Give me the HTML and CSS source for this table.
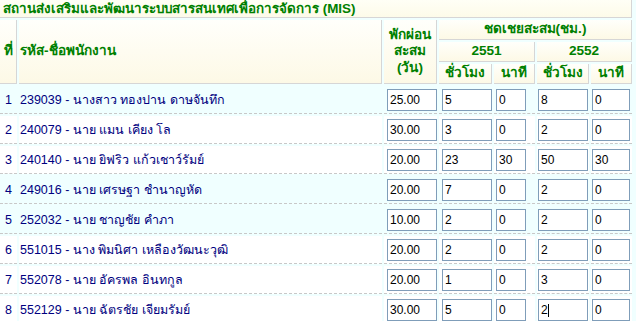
FILE: index.html
```html
<!DOCTYPE html>
<html lang="th">
<head>
<meta charset="utf-8">
<title>MIS</title>
<link rel="stylesheet" href="styles.css">
</head>
<body>
<table class="grid">
  <colgroup>
    <col class="c1"><col class="c2"><col class="c3"><col class="c4"><col class="c5"><col class="c6"><col class="c7">
  </colgroup>
  <thead>
    <tr><th class="title" colspan="7">สถานส่งเสริมและพัฒนาระบบสารสนเทศเพื่อการจัดการ (MIS)</th></tr>
    <tr>
      <th class="hd center" rowspan="3">ที่</th>
      <th class="hd left" rowspan="3">รหัส-ชื่อพนักงาน</th>
      <th class="hd center stack" rowspan="3">พักผ่อน<br>สะสม<br>(วัน)</th>
      <th class="hd center" colspan="4">ชดเชยสะสม(ชม.)</th>
    </tr>
    <tr>
      <th class="hd center" colspan="2">2551</th>
      <th class="hd center" colspan="2">2552</th>
    </tr>
    <tr>
      <th class="hd center">ชั่วโมง</th>
      <th class="hd center">นาที</th>
      <th class="hd center">ชั่วโมง</th>
      <th class="hd center">นาที</th>
    </tr>
  </thead>
  <tbody>
    <tr class="hl">
      <td class="num">1</td><td class="name">239039 - นางสาว ทองปาน ดาษจันทึก</td>
      <td class="p3"><input class="fld w50" value="25.00"></td><td class="p3"><input class="fld w50" value="5"></td>
      <td class="p2"><input class="fld w30" value="0"></td><td class="p1"><input class="fld w50" value="8"></td>
      <td class="p1"><input class="fld w38" value="0"></td>
    </tr>
    <tr>
      <td class="num">2</td><td class="name">240079 - นาย แมน เคียง โล</td>
      <td class="p3"><input class="fld w50" value="30.00"></td><td class="p3"><input class="fld w50" value="3"></td>
      <td class="p2"><input class="fld w30" value="0"></td><td class="p1"><input class="fld w50" value="2"></td>
      <td class="p1"><input class="fld w38" value="0"></td>
    </tr>
    <tr>
      <td class="num">3</td><td class="name">240140 - นาย ยิฟริว แก้วเชาว์รัมย์</td>
      <td class="p3"><input class="fld w50" value="20.00"></td><td class="p3"><input class="fld w50" value="23"></td>
      <td class="p2"><input class="fld w30" value="30"></td><td class="p1"><input class="fld w50" value="50"></td>
      <td class="p1"><input class="fld w38" value="30"></td>
    </tr>
    <tr class="hl">
      <td class="num">4</td><td class="name">249016 - นาย เศรษฐา ชำนาญหัด</td>
      <td class="p3"><input class="fld w50" value="20.00"></td><td class="p3"><input class="fld w50" value="7"></td>
      <td class="p2"><input class="fld w30" value="0"></td><td class="p1"><input class="fld w50" value="2"></td>
      <td class="p1"><input class="fld w38" value="0"></td>
    </tr>
    <tr class="hl">
      <td class="num">5</td><td class="name">252032 - นาย ชาญชัย คำภา</td>
      <td class="p3"><input class="fld w50" value="10.00"></td><td class="p3"><input class="fld w50" value="2"></td>
      <td class="p2"><input class="fld w30" value="0"></td><td class="p1"><input class="fld w50" value="2"></td>
      <td class="p1"><input class="fld w38" value="0"></td>
    </tr>
    <tr>
      <td class="num">6</td><td class="name">551015 - นาง พิมนิศา เหลืองวัฒนะวุฒิ</td>
      <td class="p3"><input class="fld w50" value="20.00"></td><td class="p3"><input class="fld w50" value="2"></td>
      <td class="p2"><input class="fld w30" value="0"></td><td class="p1"><input class="fld w50" value="2"></td>
      <td class="p1"><input class="fld w38" value="0"></td>
    </tr>
    <tr>
      <td class="num">7</td><td class="name">552078 - นาย อัครพล อินทกูล</td>
      <td class="p3"><input class="fld w50" value="20.00"></td><td class="p3"><input class="fld w50" value="1"></td>
      <td class="p2"><input class="fld w30" value="0"></td><td class="p1"><input class="fld w50" value="3"></td>
      <td class="p1"><input class="fld w38" value="0"></td>
    </tr>
    <tr>
      <td class="num">8</td><td class="name">552129 - นาย ฉัตรชัย เจียมรัมย์</td>
      <td class="p3"><input class="fld w50" value="30.00"></td><td class="p3"><input class="fld w50" value="5"></td>
      <td class="p2"><input class="fld w30" value="0"></td><td class="p1"><input class="fld w50 caret" value="2"></td>
      <td class="p1"><input class="fld w38" value="0"></td>
    </tr>
  </tbody>
</table>
</body>
</html>
```

FILE: styles.css
```css
html, body {
  margin: 0;
  padding: 0;
  background: #f0ffff;
  overflow: hidden;
}

body {
  font-family: Tahoma, "Liberation Sans", sans-serif;
  font-size: 12.5px;
  color: #000080;
}

.grid {
  border-collapse: separate;
  border-spacing: 2px;
  table-layout: fixed;
  width: 636px;
  margin: -2px 0 0 -2px;
}

.c1 { width: 17px; }
.c2 { width: 363px; }
.c3 { width: 53px; }
.c4 { width: 53px; }
.c5 { width: 41px; }
.c6 { width: 52px; }
.c7 { width: 41px; }

.grid th,
.grid td {
  box-sizing: border-box;
  padding: 0;
}

.title {
  height: 18px;
  background: linear-gradient(#fffff6, #fdfbe9);
  border-right: 1px solid #d6d6d6;
  border-bottom: 1px solid #d6d6d6;
  color: #008000;
  font-weight: bold;
  font-size: 13.4px;
  text-align: left;
  padding-left: 3px !important;
  white-space: nowrap;
  line-height: 16px;
}

.hd {
  height: 20px;
  background: linear-gradient(#fffffb, #fdf9e6);
  border-right: 1px solid #d6d6d6;
  border-bottom: 1px solid #d6d6d6;
  color: #008000;
  font-weight: bold;
  font-size: 13.6px;
  line-height: 16.5px;
  vertical-align: middle;
  white-space: nowrap;
}

.center { text-align: center; }
.left { text-align: left; padding-left: 1px !important; }

.grid td {
  height: 28px;
  background: #ffffff;
  border-bottom: 1px dashed #c8c8c8;
  vertical-align: middle;
  white-space: nowrap;
}

.grid tr.hl td { background: #f0ffff; }

.num { text-align: center; }
.name { padding-left: 1px !important; }

.p1 { padding-left: 1px !important; }
.p2 { padding-left: 2px !important; }
.p3 { padding-left: 3px !important; }

.fld {
  display: block;
  box-sizing: border-box;
  height: 22px;
  margin: 0;
  padding: 0 0 0 2px;
  border: 1px solid #7f9db9;
  background: #ffffff;
  color: #000000;
  font-family: "Liberation Sans", sans-serif;
  font-size: 12px;
  outline: none;
}

.caret {
  background: linear-gradient(#000000, #000000) no-repeat 9px 4px / 1px 13px, #ffffff;
}

.w50 { width: 50px; }
.w30 { width: 30px; }
.w38 { width: 38px; }
```
